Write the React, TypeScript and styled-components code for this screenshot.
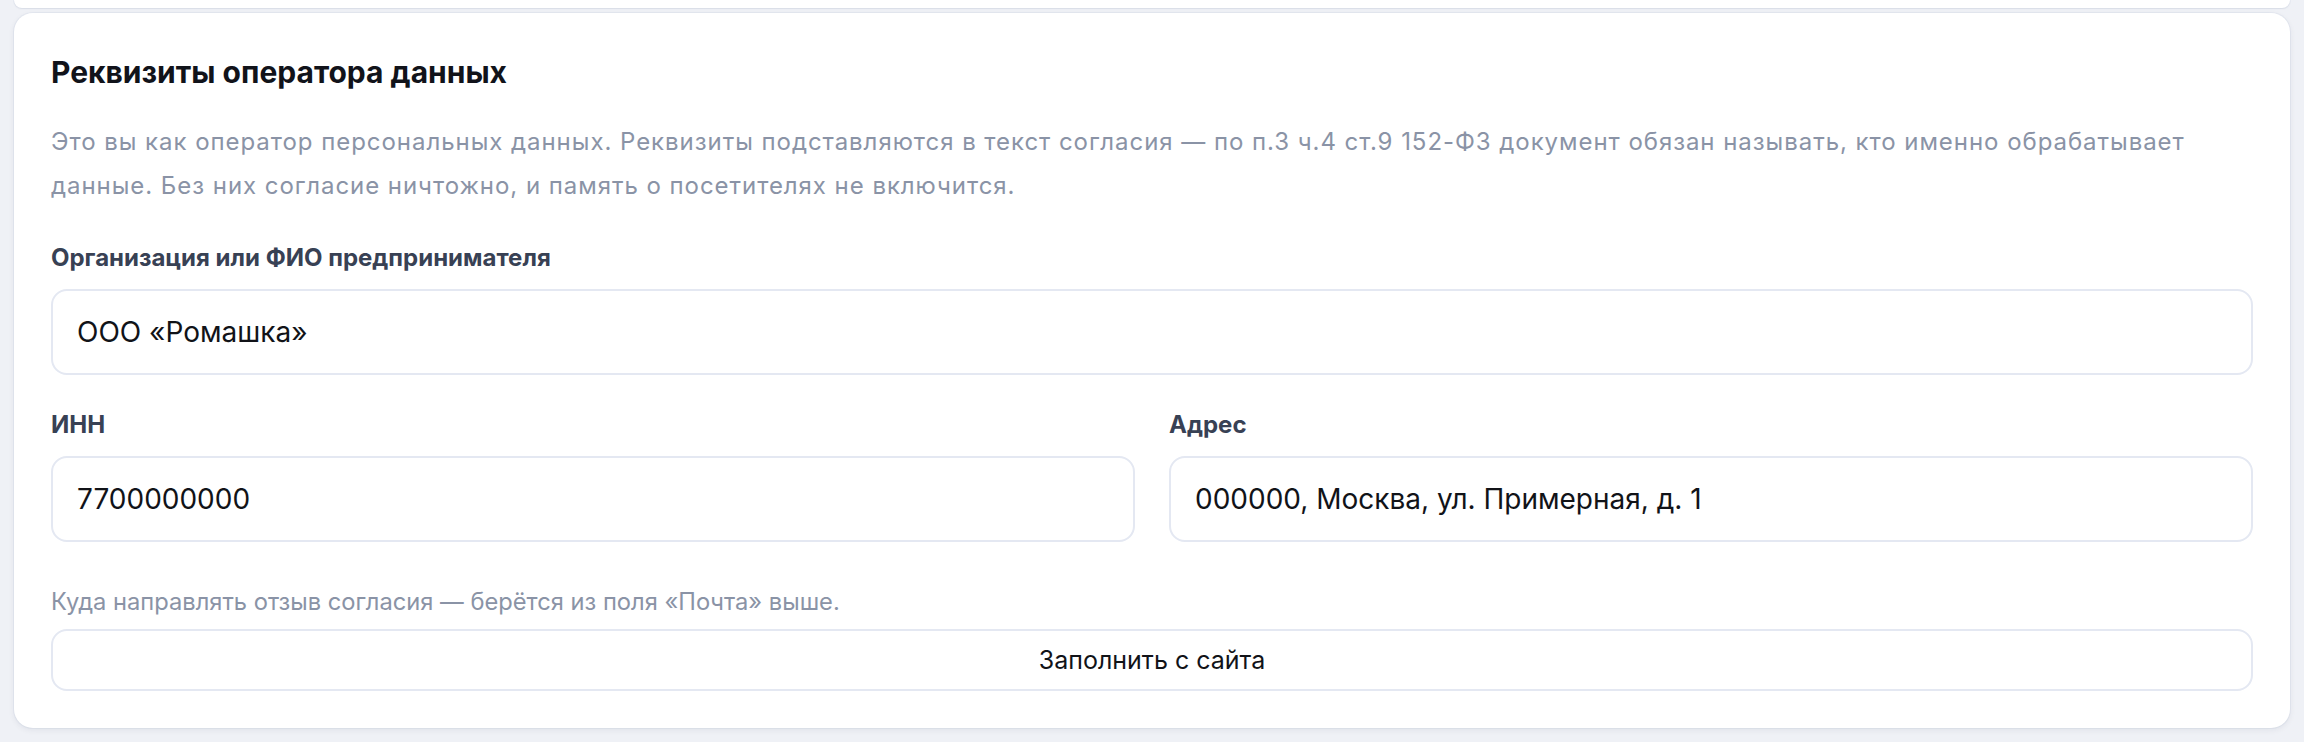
import styled, { createGlobalStyle } from "styled-components";

const GlobalStyle = createGlobalStyle`
  html, body {
    margin: 0;
    padding: 0;
    background: #eff1f6;
  }
  body {
    font-family: Inter, "Noto Sans", sans-serif;
    -webkit-font-smoothing: antialiased;
  }
  * {
    box-sizing: border-box;
  }
`;

const StyledPage = styled.div`
  display: flex;
  flex-direction: column;
  gap: 5px;
  padding: 0 14px 13px;
  min-height: 742px;
`;

// хвост предыдущей карточки, уехавшей вверх
const StyledPrevCard = styled.div`
  height: 8px;
  background: #ffffff;
  border-radius: 0 0 20px 20px;
  box-shadow: 0 1px 2px rgba(20, 30, 60, 0.06), 0 0 0 1px rgba(225, 229, 239, 0.7);
`;

const StyledCard = styled.section`
  display: flex;
  flex-direction: column;
  background: #ffffff;
  border-radius: 19px;
  padding: 41px 37px 37px;
  box-shadow: 0 2px 6px rgba(20, 30, 60, 0.07), 0 0 0 1px rgba(225, 229, 239, 0.7);
`;

const StyledTitle = styled.h2`
  margin: 0;
  font-size: 30px;
  line-height: 36px;
  font-weight: 700;
  color: #11131a;
`;

// серый поясняющий текст
const StyledNote = styled.p<{ $gap: number; $lh: number; $size: number; $spacing?: number }>`
  margin: ${(p) => p.$gap}px 0 0;
  font-size: ${(p) => p.$size}px;
  line-height: ${(p) => p.$lh}px;
  letter-spacing: ${(p) => p.$spacing ?? 0}px;
  color: #8a93a6;
`;

const StyledField = styled.label<{ $gap?: number }>`
  display: flex;
  flex-direction: column;
  gap: 17px;
  margin-top: ${(p) => p.$gap ?? 0}px;
`;

const StyledLabel = styled.span`
  font-size: 24px;
  line-height: 29px;
  font-weight: 700;
  color: #384154;
`;

const StyledInput = styled.input`
  height: 86px;
  width: 100%;
  padding: 0 24px;
  border: 2px solid #e4e8f2;
  border-radius: 16px;
  background: #ffffff;
  font-family: inherit;
  font-size: 28px;
  color: #111318;
  outline: none;
`;

const StyledRow = styled.div`
  display: grid;
  grid-template-columns: 1fr 1fr;
  gap: 34px;
  margin-top: 35px;
`;

const StyledButton = styled.button`
  margin-top: 10px;
  height: 62px;
  width: 100%;
  border: 2px solid #e4e8f2;
  border-radius: 16px;
  background: #ffffff;
  font-family: inherit;
  font-size: 25px;
  color: #111318;
  cursor: pointer;
`;

// реквизиты оператора персональных данных
export default function App() {
  return (
    <>
      <GlobalStyle />
      <StyledPage>
        <StyledPrevCard />
        <StyledCard>
          <StyledTitle>Реквизиты оператора данных</StyledTitle>
          <StyledNote $gap={30} $lh={44} $size={24} $spacing={0.95}>
            Это вы как оператор персональных данных. Реквизиты подставляются в
            текст согласия — по п.3 ч.4 ст.9 152-ФЗ документ обязан называть, кто
            именно обрабатывает данные. Без них согласие ничтожно, и память о
            посетителях не включится.
          </StyledNote>

          <StyledField $gap={35}>
            <StyledLabel>Организация или ФИО предпринимателя</StyledLabel>
            <StyledInput defaultValue="ООО «Ромашка»" />
          </StyledField>

          <StyledRow>
            <StyledField>
              <StyledLabel>ИНН</StyledLabel>
              <StyledInput defaultValue="7700000000" />
            </StyledField>
            <StyledField>
              <StyledLabel>Адрес</StyledLabel>
              <StyledInput defaultValue="000000, Москва, ул. Примерная, д. 1" />
            </StyledField>
          </StyledRow>

          <StyledNote $gap={42} $lh={35} $size={23.7}>
            Куда направлять отзыв согласия — берётся из поля «Почта» выше.
          </StyledNote>
          <StyledButton type="button">Заполнить с сайта</StyledButton>
        </StyledCard>
      </StyledPage>
    </>
  );
}
